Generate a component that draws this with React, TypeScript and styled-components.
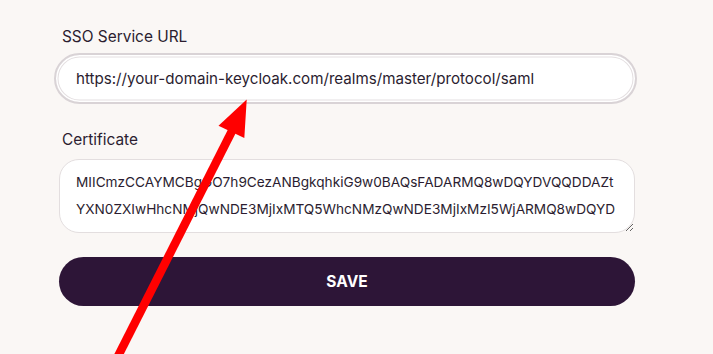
import React from "react";
import styled, { createGlobalStyle } from "styled-components";

const Global = createGlobalStyle`
  html, body { margin: 0; padding: 0; background: #faf7f5; }
  body { font-family: Inter, "Noto Sans", sans-serif; color: #2b1d30; }
`;

const Page = styled.div`
  position: relative;
  width: 713px;
  height: 354px;
  overflow: hidden;
  background: #faf7f5;
`;

const Form = styled.form`
  display: flex;
  flex-direction: column;
  width: 576px;
  margin-left: 59px;
  padding-top: 27px;
`;

const Field = styled.div<{ $mt?: number }>`
  display: flex;
  flex-direction: column;
  margin-top: ${(p) => p.$mt ?? 0}px;
`;

const Label = styled.label<{ $gap: number }>`
  font-size: 15.4px;
  line-height: 20px;
  color: #2b1d30;
  padding-left: 3px;
  margin-bottom: ${(p) => p.$gap}px;
`;

const TextInput = styled.input`
  box-sizing: border-box;
  height: 51px;
  margin-left: -5px;
  width: calc(100% + 7px);
  border-radius: 26px;
  border: 2px solid #d9d3d6;
  box-shadow: inset 0 0 0 1.5px #ffffff, inset 0 0 0 2.5px #e4dfe1;
  background: #ffffff;
  padding: 0 20px;
  font-family: Inter, "Noto Sans", sans-serif;
  font-size: 15.15px;
  color: #2b1d30;
  outline: none;
`;

const TextArea = styled.textarea`
  box-sizing: border-box;
  height: 74px;
  width: 100%;
  border-radius: 20px;
  border: 1px solid #e3dedf;
  background: #ffffff;
  padding: 9px 16px 0 16px;
  font-family: Inter, "Noto Sans", sans-serif;
  font-size: 13.65px;
  line-height: 27px;
  color: #2b1d30;
  white-space: pre;
  overflow: hidden;
  outline: none;
  resize: vertical;
`;

const SaveButton = styled.button`
  margin-top: 24px;
  height: 49px;
  width: 100%;
  border: none;
  border-radius: 25px;
  background: #2d1537;
  color: #ffffff;
  font-family: Inter, "Noto Sans", sans-serif;
  font-weight: 700;
  font-size: 15.5px;
  letter-spacing: 0.1px;
  cursor: pointer;
`;

const Overlay = styled.svg`
  position: absolute;
  left: 0;
  top: 0;
  pointer-events: none;
`;

const cert =
  "MIICmzCCAYMCBgGO7h9CezANBgkqhkiG9w0BAQsFADARMQ8wDQYDVQQDDAZt\n" +
  "YXN0ZXIwHhcNMjQwNDE3MjIxMTQ5WhcNMzQwNDE3MjIxMzI5WjARMQ8wDQYD";

export default function App() {
  return (
    <Page>
      <Global />
      <Form onSubmit={(e) => e.preventDefault()}>
        <Field>
          <Label $gap={6}>SSO Service URL</Label>
          <TextInput
            defaultValue="https://your-domain-keycloak.com/realms/master/protocol/saml"
          />
        </Field>
        <Field $mt={26}>
          <Label $gap={9}>Certificate</Label>
          <TextArea defaultValue={cert} />
        </Field>
        <SaveButton type="submit">SAVE</SaveButton>
      </Form>
      <Overlay width="713" height="354" viewBox="0 0 713 354">
        <line x1="110" y1="372" x2="233" y2="129" stroke="#ff0000" strokeWidth="8.5" />
        <polygon points="246.7,99.5 218.5,125.7 244.3,138" fill="#ff0000" />
      </Overlay>
    </Page>
  );
}
